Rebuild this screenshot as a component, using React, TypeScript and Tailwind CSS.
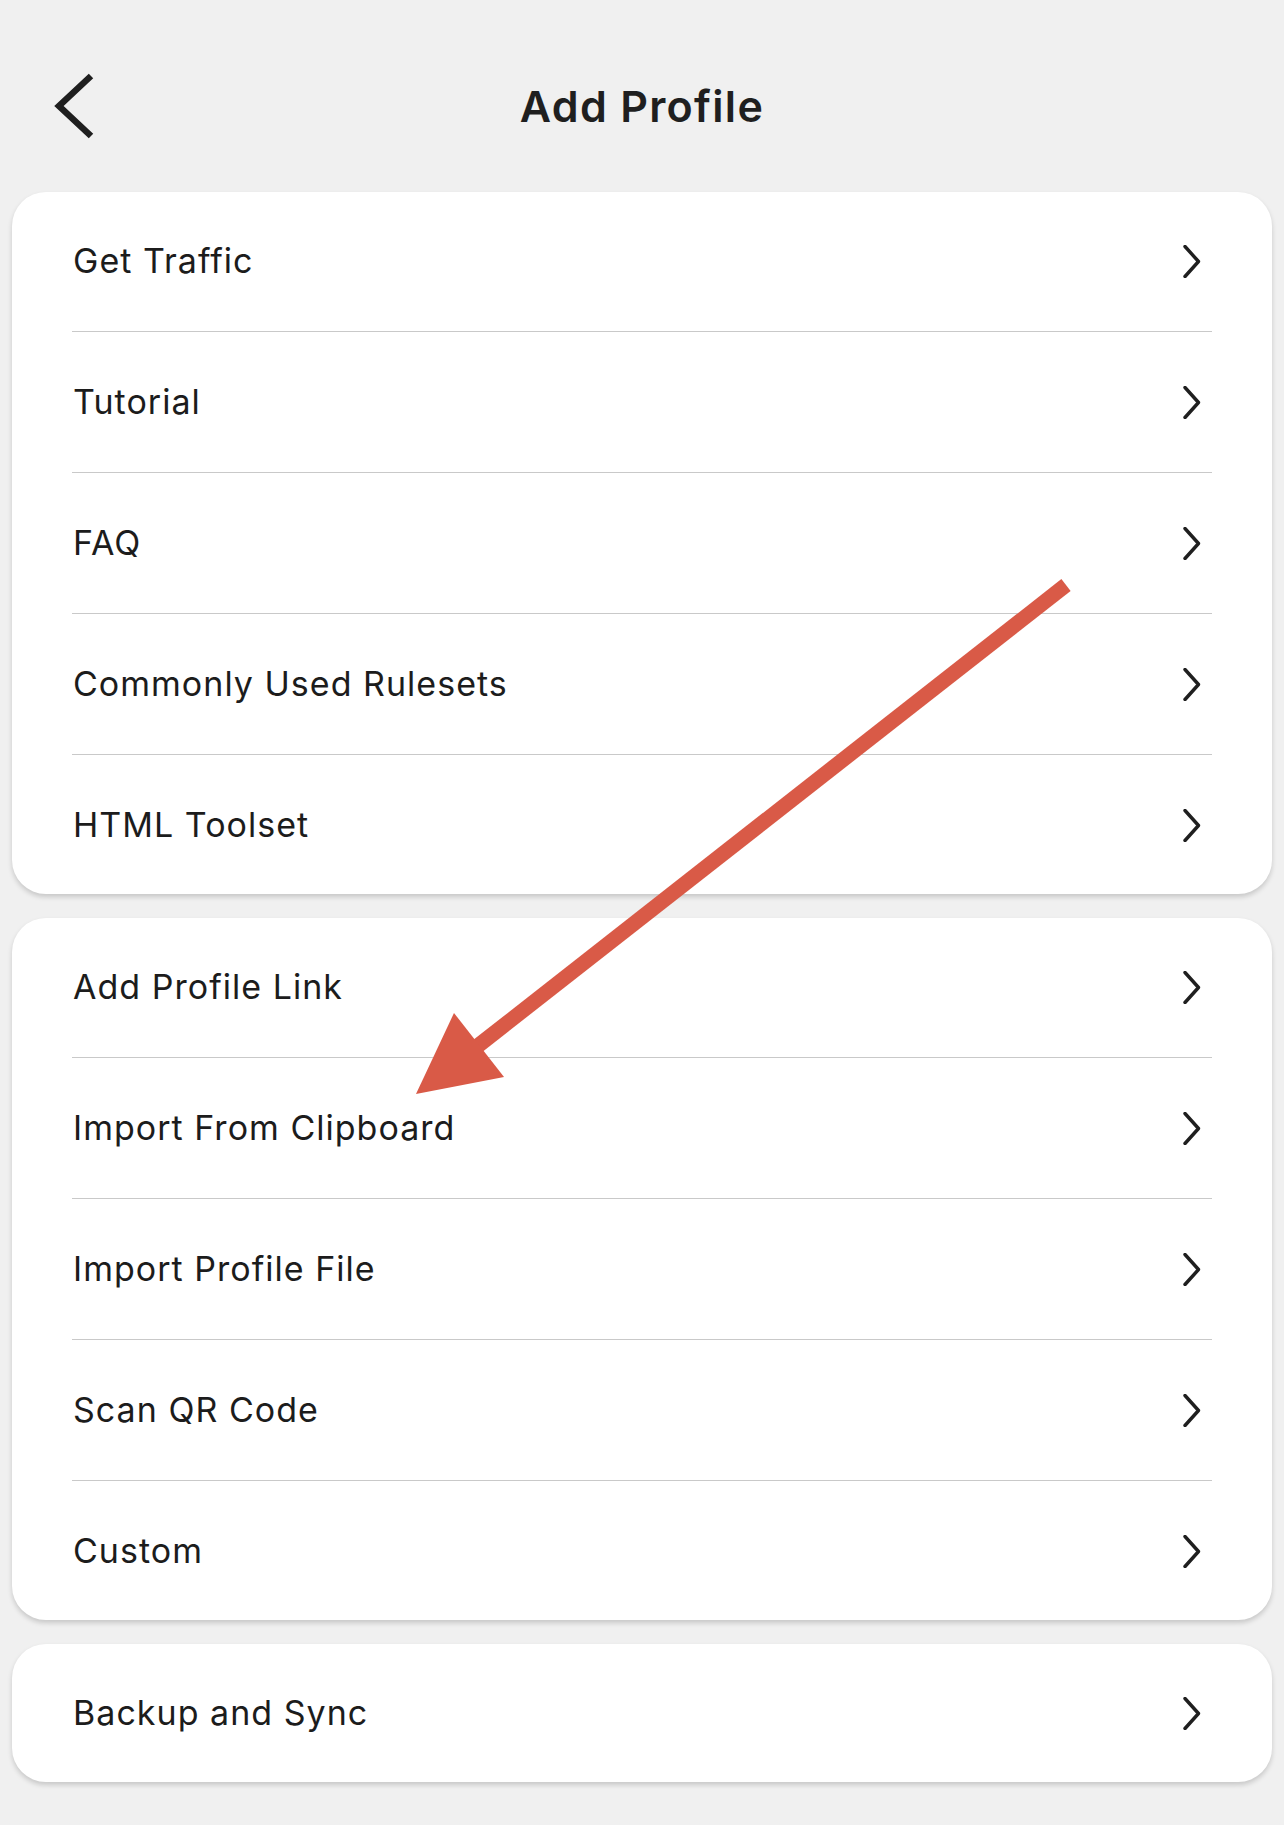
import React from "react";

const GROUPS: string[][] = [
  ["Get Traffic", "Tutorial", "FAQ", "Commonly Used Rulesets", "HTML Toolset"],
  ["Add Profile Link", "Import From Clipboard", "Import Profile File", "Scan QR Code", "Custom"],
  ["Backup and Sync"],
];

function Chevron() {
  return (
    <svg width="18" height="33" viewBox="0 0 18 33" fill="none">
      <path
        d="M2 1.5 L15.5 16.5 L2 31.5"
        stroke="#1f1f1f"
        strokeWidth="3.4"
        strokeLinecap="round"
        strokeLinejoin="round"
      />
    </svg>
  );
}

function Row({ label }: { label: string }) {
  return (
    <div className="mx-[60px] flex h-[138px] items-center justify-between">
      <span className="pb-[2px] pl-[1px] text-[34px] tracking-[0.03em] text-[#1c1c1c]">{label}</span>
      <span className="pr-[11px]">
        <Chevron />
      </span>
    </div>
  );
}

export default function App() {
  return (
    <div
      className="relative min-h-[1825px] w-full bg-[#f0f0f0] pt-[40px]"
      style={{ fontFamily: "Inter, 'Noto Sans', sans-serif" }}
    >
      <header className="relative flex h-[132px] items-center justify-center">
        <button className="absolute left-[50px] top-[31px]">
          <svg width="46" height="70" viewBox="0 0 46 70" fill="none">
            <path
              d="M41 5 L9 35 L41 65"
              stroke="#1f1f1f"
              strokeWidth="6.5"
              strokeLinecap="butt"
              strokeLinejoin="miter"
            />
          </svg>
        </button>
        <h1 className="text-[43px] font-semibold tracking-[0.03em] text-[#1f1f1f]">Add Profile</h1>
      </header>

      <div className="flex flex-col gap-[24px] px-[12px] pt-[20px]">
        {GROUPS.map((items, gi) => (
          <div
            key={gi}
            className="rounded-[34px] bg-white shadow-[0_3px_5px_rgba(0,0,0,0.17)]"
          >
            {items.map((label, i) => (
              <div key={label}>
                {i > 0 && <div className="mx-[60px] my-[1px] h-px bg-[#c9c9c9]" />}
                <Row label={label} />
              </div>
            ))}
          </div>
        ))}
      </div>

      {/* red annotation arrow */}
      <svg
        className="pointer-events-none absolute left-0 top-0"
        width="1284"
        height="1825"
        viewBox="0 0 1284 1825"
      >
        <line x1="1066" y1="585" x2="470" y2="1052" stroke="#d95a47" strokeWidth="15" />
        <polygon points="416,1094 454,1013 504,1077" fill="#d95a47" />
      </svg>
    </div>
  );
}
